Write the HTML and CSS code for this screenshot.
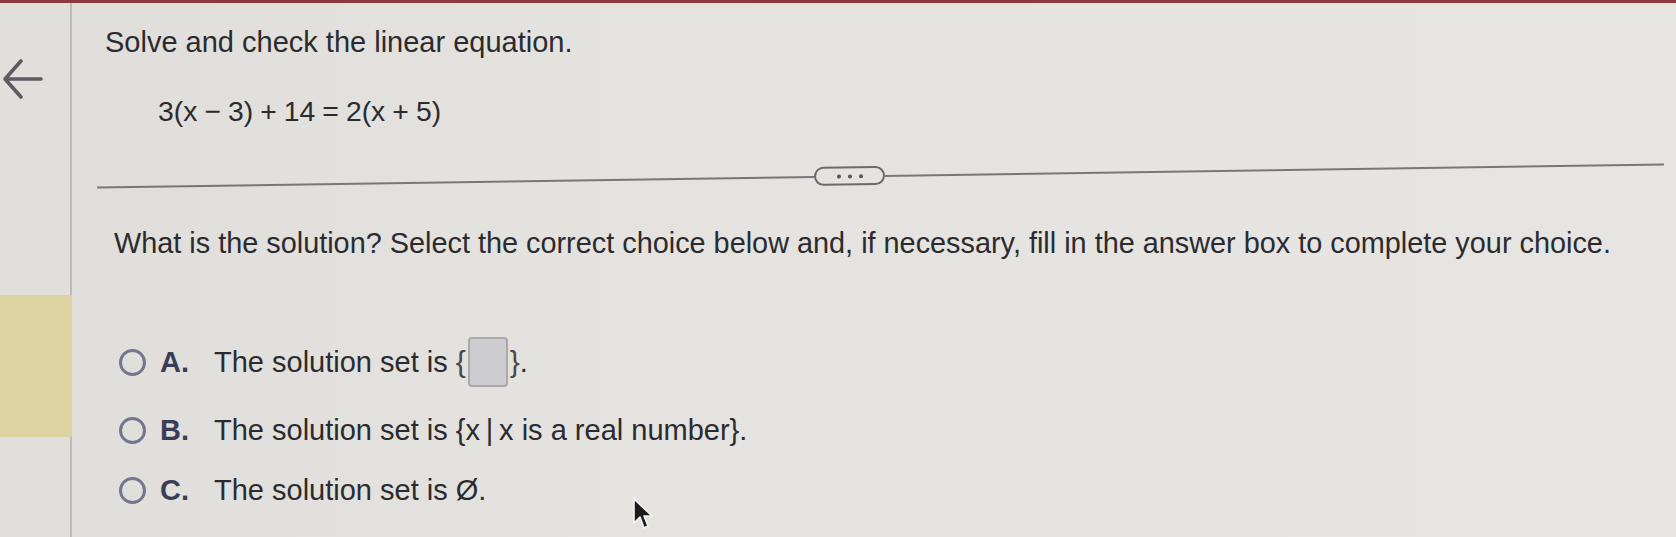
FILE: index.html
```html
<!DOCTYPE html>
<html lang="en">
<head>
<meta charset="utf-8">
<title>Solve and check the linear equation</title>
<link rel="stylesheet" href="styles.css">
</head>
<body>
<div class="topbar"></div>
<div class="page">
  <aside class="sidebar">
    <svg class="back" width="42" height="44" viewBox="0 0 42 44" aria-label="Back">
      <path d="M40 22 H5 M20 4 L4 22 L20 40" fill="none" stroke="#5b5b60" stroke-width="3.6" stroke-linecap="round" stroke-linejoin="round"/>
    </svg>
    <div class="flag"></div>
  </aside>
  <main class="content">
    <h1 class="title">Solve and check the linear equation.</h1>
    <div class="equation">3(x&#8197;&minus;&#8197;3)&#8197;+&#8197;14&#8197;=&#8197;2(x&#8197;+&#8197;5)</div>
    <div class="separator">
      <span class="rule rule-left"></span>
      <span class="more"><i></i><i></i><i></i></span>
      <span class="rule rule-right"></span>
    </div>
    <p class="question">What is the solution? Select the correct choice below and, if necessary, fill in the answer box to complete your choice.</p>
    <ul class="choices">
      <li class="choice choice-a">
        <span class="radio"></span>
        <span class="letter">A.</span>
        <span class="text">The solution set is <span class="set"><span class="brace">{</span><span class="answer-box"></span><span class="brace">}</span></span>.</span>
      </li>
      <li class="choice">
        <span class="radio"></span>
        <span class="letter">B.</span>
        <span class="text">The solution set is {x&#8201;|&#8201;x is a real number}.</span>
      </li>
      <li class="choice">
        <span class="radio"></span>
        <span class="letter">C.</span>
        <span class="text">The solution set is &Oslash;.</span>
      </li>
    </ul>
  </main>
</div>
<svg class="cursor" width="22" height="34" viewBox="0 0 22 34">
  <path d="M2 2 L2 26 L8 20 L12 31 L16 29 L12 19 L20 19 Z" fill="#1c1c1e" stroke="#f4f4f2" stroke-width="1.6" stroke-linejoin="round"/>
</svg>
</body>
</html>
```
FILE: styles.css
```css
html, body {
  margin: 0;
  padding: 0;
}
body {
  width: 1676px;
  height: 537px;
  overflow: hidden;
  background: linear-gradient(90deg, #dfdeda 0%, #e4e3df 40%, #e6e5e1 100%);
  font-family: "Liberation Sans", Arial, sans-serif;
  color: #2b2b2f;
  position: relative;
}
.topbar {
  height: 3px;
  background: #8c3a40;
}
.page {
  display: flex;
  height: 534px;
}
.sidebar {
  width: 70px;
  flex: none;
  border-right: 2px solid #bdbbb6;
  display: flex;
  flex-direction: column;
  background: #e0dfdb;
}
.back {
  margin: 54px 0 0 1px;
  display: block;
}
.flag {
  margin-top: 194px;
  height: 142px;
  background: #dcd3a1;
  margin-right: -2px;
}
.content {
  flex: 1;
  padding-left: 33px;
  padding-right: 12px;
}
.title {
  margin: 23px 0 0;
  font-size: 29px;
  font-weight: normal;
  line-height: 33px;
}
.equation {
  margin: 36px 0 0 53px;
  font-size: 28.3px;
  line-height: 33px;
}
.separator {
  display: flex;
  align-items: center;
  margin: 38px 0 0 -8px;
  transform: rotate(-0.85deg);
  transform-origin: 50% 50%;
}
.rule {
  height: 2px;
  background: #77777a;
}
.rule-left {
  width: 717px;
}
.rule-right {
  flex: 1;
}
.more {
  box-sizing: border-box;
  width: 71px;
  height: 19px;
  border: 2px solid #6a6a6e;
  border-radius: 10px;
  display: flex;
  align-items: center;
  justify-content: center;
  gap: 7px;
}
.more i {
  width: 4px;
  height: 4px;
  border-radius: 50%;
  background: #555559;
}
.question {
  margin: 42px 0 0 9px;
  font-size: 28.85px;
  line-height: 33px;
}
.choices {
  list-style: none;
  margin: 72px 0 0 14px;
  padding: 0;
  display: flex;
  flex-direction: column;
}
.choice {
  display: flex;
  align-items: center;
  height: 60px;
  font-size: 29px;
}
.choice-a {
  margin-bottom: 8px;
}
.radio {
  box-sizing: border-box;
  width: 27px;
  height: 27px;
  border-radius: 50%;
  border: 3px solid #72768f;
  flex: none;
}
.letter {
  margin-left: 14px;
  width: 54px;
  font-weight: bold;
  color: #3a3d58;
}
.text {
  display: inline-flex;
  align-items: center;
  white-space: pre;
}
.set {
  display: inline-flex;
  align-items: center;
}
.brace {
  font-size: 30px;
  color: #48484c;
}
.answer-box {
  box-sizing: border-box;
  width: 40px;
  height: 50px;
  margin: 0 2px;
  border: 2px solid #a9a9ad;
  border-radius: 4px;
  background: #cdcdcf;
}
.cursor {
  position: absolute;
  left: 632px;
  top: 497px;
}
```
